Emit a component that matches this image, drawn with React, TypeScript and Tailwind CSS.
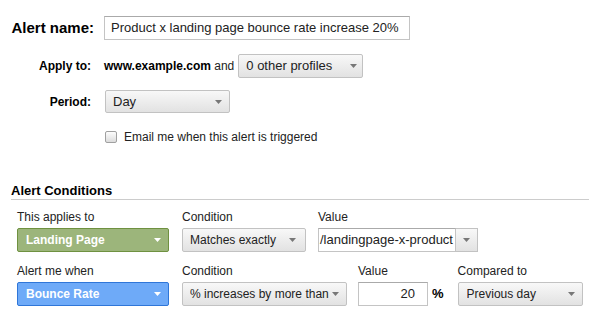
import type { ReactNode } from 'react'

function Arrow({ white = false }: { white?: boolean }) {
  return (
    <svg width="7" height="4" viewBox="0 0 7 4" className="shrink-0">
      <path d="M0 0h7L3.5 4z" fill={white ? '#ffffff' : '#777777'} />
    </svg>
  )
}

function Select({
  children,
  className,
  tone = 'gray',
}: {
  children: ReactNode
  className: string
  tone?: 'gray' | 'green' | 'blue'
}) {
  const toneClass =
    tone === 'green'
      ? 'border-[#6f9140] bg-[#9cb57b] font-bold text-white'
      : tone === 'blue'
        ? 'border-[#2f76d8] bg-[#6eaaf8] font-bold text-white'
        : 'border-[#c2c2c2] bg-gradient-to-b from-[#f8f8f8] to-[#e2e2e2] text-[#222]'
  return (
    <div className={`flex items-center rounded-[2px] border ${toneClass} ${className}`}>
      <span className="flex-1 truncate whitespace-nowrap">{children}</span>
      <Arrow white={tone !== 'gray'} />
    </div>
  )
}

export default function App() {
  return (
    <div
      className="h-[322px] w-[589px] overflow-hidden bg-white text-[12px] text-[#222]"
      style={{ fontFamily: '"Liberation Sans", Arial, sans-serif' }}
    >
      <div className="pt-[16px]">
        <div className="flex h-[24px] items-center">
          <div className="w-[94px] shrink-0 text-right text-[15px] font-bold text-black">Alert name:</div>
          <div className="ml-[10px] flex h-[24px] w-[306px] items-center border border-[#c4c4c4] border-t-[#aaa] pl-[6px] text-[13px]">
            Product x landing page bounce rate increase 20%
          </div>
        </div>

        <div className="mt-[14px] flex h-[24px] items-center">
          <div className="w-[91px] shrink-0 text-right font-bold text-black">Apply to:</div>
          <div className="ml-[13px] whitespace-nowrap">
            <span className="font-bold text-black">www.example.com</span> and
          </div>
          <Select className="ml-[4px] h-[24px] w-[125px] pl-[7px] pr-[5px] text-[13px]">0 other profiles</Select>
        </div>

        <div className="mt-[12px] flex h-[23px] items-center">
          <div className="w-[91px] shrink-0 text-right font-bold text-black">Period:</div>
          <Select className="ml-[14px] h-[23px] w-[125px] pl-[7px] pr-[7px] text-[13px]">Day</Select>
        </div>

        <div className="mt-[17px] flex h-[13px] items-center pl-[105px]">
          <div className="h-[12px] w-[12px] rounded-[2px] border border-[#a0a0a0] bg-gradient-to-b from-[#fdfdfd] to-[#dcdcdc]" />
          <span className="ml-[7px]">Email me when this alert is triggered</span>
        </div>
      </div>

      <div className="ml-[11px] mt-[39px] border-b border-[#cccccc] text-[13px] font-bold leading-[17px] text-black">
        Alert Conditions
      </div>

      <div className="mt-[9px] flex pl-[17px]">
        <div className="w-[152px]">
          <div className="h-[16px] leading-[16px]">This applies to</div>
          <Select tone="green" className="mt-[3px] h-[24px] w-[152px] pl-[8px] pr-[7px]">
            Landing Page
          </Select>
        </div>
        <div className="ml-[13px] w-[124px]">
          <div className="h-[16px] leading-[16px]">Condition</div>
          <Select className="mt-[3px] h-[24px] w-[124px] pl-[7px] pr-[9px]">Matches exactly</Select>
        </div>
        <div className="ml-[12px]">
          <div className="h-[16px] leading-[16px]">Value</div>
          <div className="mt-[3px] flex h-[24px] w-[160px]">
            <div className="flex flex-1 items-center overflow-hidden whitespace-nowrap border border-[#c4c4c4] border-t-[#aaa] pl-[1px] text-[13px]">
              /landingpage-x-product
            </div>
            <div className="flex w-[22px] items-center justify-center border border-l-0 border-[#c2c2c2] bg-gradient-to-b from-[#f8f8f8] to-[#e2e2e2]">
              <Arrow />
            </div>
          </div>
        </div>
      </div>

      <div className="mt-[11px] flex pl-[17px]">
        <div className="w-[152px]">
          <div className="h-[16px] leading-[16px]">Alert me when</div>
          <Select tone="blue" className="mt-[3px] h-[24px] w-[152px] pl-[8px] pr-[7px]">
            Bounce Rate
          </Select>
        </div>
        <div className="ml-[13px] w-[165px]">
          <div className="h-[16px] leading-[16px]">Condition</div>
          <Select className="mt-[3px] h-[24px] w-[165px] pl-[7px] pr-[7px]">% increases by more than</Select>
        </div>
        <div className="ml-[11px]">
          <div className="h-[16px] leading-[16px]">Value</div>
          <div className="mt-[3px] flex h-[24px] items-center">
            <div className="flex h-[24px] w-[70px] items-center justify-end border border-[#c4c4c4] border-t-[#aaa] pr-[12px] text-[13px]">
              20
            </div>
            <span className="ml-[4px] text-[13px] font-bold text-black">%</span>
          </div>
        </div>
        <div className="ml-[14px]">
          <div className="h-[16px] leading-[16px]">Compared to</div>
          <Select className="mt-[3px] h-[24px] w-[125px] pl-[8px] pr-[7px]">Previous day</Select>
        </div>
      </div>
    </div>
  )
}
